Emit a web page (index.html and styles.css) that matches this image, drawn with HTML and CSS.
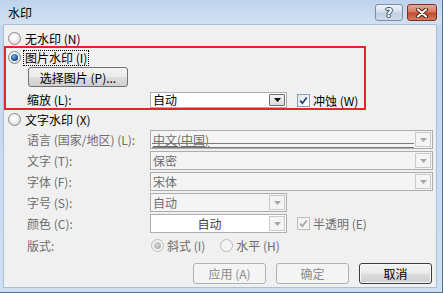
FILE: index.html
```html
<!DOCTYPE html>
<html lang="zh-CN">
<head>
<meta charset="utf-8">
<title>水印</title>
<link rel="stylesheet" href="styles.css">
</head>
<body>
<div class="window">
  <div class="titlebar">
    <span class="title">水印</span>
    <div class="caps">
      <span class="capbtn help">?</span>
      <span class="capbtn close"><svg width="14" height="10" viewBox="0 0 14 10"><path d="M3 1.5 L11 8.5 M11 1.5 L3 8.5" stroke="#4a1b10" stroke-width="4" stroke-linecap="round"/><path d="M3 1.5 L11 8.5 M11 1.5 L3 8.5" stroke="#fff" stroke-width="2.2" stroke-linecap="round"/></svg></span>
    </div>
  </div>
  <div class="client">
    <div class="opt row-none"><span class="radio"></span><span class="otext">无水印 (N)</span></div>

    <div class="picgroup">
      <div class="opt row-pic"><span class="radio on"></span><span class="otext focus">图片水印 (I)</span></div>
      <div class="btn pick">选择图片 (P)...</div>
      <div class="scale-row">
        <span class="lbl">缩放 (L):</span>
        <div class="combo enabled short"><span class="val">自动</span><span class="drop"><svg width="7" height="4" viewBox="0 0 7 4"><path d="M0 0 H7 L3.5 4 Z" fill="#000"/></svg></span></div>
        <span class="check on"><svg width="11" height="11" viewBox="0 0 11 11"><path d="M2.2 5.6 L4.4 8.2 L8.8 2.4" fill="none" stroke="#21407a" stroke-width="1.7"/></svg></span>
        <span class="ctext">冲蚀 (W)</span>
      </div>
    </div>

    <div class="opt row-text"><span class="radio"></span><span class="otext">文字水印 (X)</span></div>

    <div class="fields">
      <span class="lbl dis">语言 (国家/地区) (L):</span>
      <div class="combo disabled full lang"><span class="val"><span class="ul">中文(中国)</span></span><span class="drop"><svg width="7" height="4" viewBox="0 0 7 4"><path d="M0 0 H7 L3.5 4 Z" fill="#a6a6a6"/></svg></span></div>

      <span class="lbl dis">文字 (T):</span>
      <div class="combo disabled full"><span class="val">保密</span><span class="drop"><svg width="7" height="4" viewBox="0 0 7 4"><path d="M0 0 H7 L3.5 4 Z" fill="#a6a6a6"/></svg></span></div>

      <span class="lbl dis">字体 (F):</span>
      <div class="combo disabled full"><span class="val">宋体</span><span class="drop"><svg width="7" height="4" viewBox="0 0 7 4"><path d="M0 0 H7 L3.5 4 Z" fill="#a6a6a6"/></svg></span></div>

      <span class="lbl dis">字号 (S):</span>
      <div class="ctrl">
        <div class="combo disabled short"><span class="val">自动</span><span class="drop"><svg width="7" height="4" viewBox="0 0 7 4"><path d="M0 0 H7 L3.5 4 Z" fill="#a6a6a6"/></svg></span></div>
      </div>

      <span class="lbl dis">颜色 (C):</span>
      <div class="ctrl">
        <div class="combo white short"><span class="val center">自动</span><span class="drop"><svg width="7" height="4" viewBox="0 0 7 4"><path d="M0 0 H7 L3.5 4 Z" fill="#a6a6a6"/></svg></span></div>
        <span class="check dis on"><svg width="11" height="11" viewBox="0 0 11 11"><path d="M2.2 5.6 L4.4 8.2 L8.8 2.4" fill="none" stroke="#a3a3a3" stroke-width="1.7"/></svg></span>
        <span class="ctext dis">半透明 (E)</span>
      </div>

      <span class="lbl dis layout">版式:</span>
      <div class="ctrl layout">
        <span class="radio dis on"></span><span class="rtext dis">斜式 (I)</span>
        <span class="radio dis second"></span><span class="rtext dis">水平 (H)</span>
      </div>
    </div>

    <div class="actions">
      <span class="btn disabled">应用 (A)</span>
      <span class="btn disabled">确定</span>
      <span class="btn default">取消</span>
    </div>
  </div>
</div>
</body>
</html>
```

FILE: styles.css
```css
* { box-sizing: border-box; }
html, body { margin: 0; padding: 0; }
body {
  width: 443px;
  height: 293px;
  overflow: hidden;
  font-family: "Noto Sans CJK SC", "Noto Sans", sans-serif;
  font-size: 12px;
  color: #000;
  background: #c9dbef;
}
.window {
  width: 443px;
  height: 293px;
  display: flex;
  flex-direction: column;
  background: linear-gradient(#c2d6ed, #cfe0f2);
  border-right: 1px solid #5a6f88;
  border-bottom: 1px solid #5a6f88;
}
.titlebar {
  height: 25px;
  flex: 0 0 25px;
  display: flex;
  justify-content: space-between;
  padding: 0 5px 0 8px;
  background: linear-gradient(#bed3ec, #d3e2f3);
}
.title {
  line-height: 25px;
  color: #000;
}
.caps {
  display: flex;
  gap: 4px;
  padding-top: 4px;
}
.capbtn {
  height: 17px;
  border-radius: 3px;
  display: flex;
  align-items: center;
  justify-content: center;
}
.help {
  width: 28px;
  border: 1px solid #7d8ea4;
  background: linear-gradient(#eef3f9, #d3dfec 48%, #bfcfe1 52%, #cfdcea);
  color: #fff;
  font-family: "DejaVu Sans", sans-serif;
  font-weight: bold;
  font-size: 13px;
  line-height: 15px;
  text-shadow: 0 0 1px #33445c, 0 0 1px #33445c, 1px 0 0 #4a5c75, -1px 0 0 #4a5c75, 0 1px 0 #4a5c75, 0 -1px 0 #4a5c75;
}
.close {
  width: 30px;
  border: 1px solid #7a2e22;
  background: linear-gradient(#e8a999, #d4775f 48%, #c2462c 52%, #d67c5e);
}
.client {
  flex: 1;
  margin: 0 6px 5px 4px;
  background: #f0f0f0;
  box-shadow: 0 0 0 1px #aac0da;
  display: flex;
  flex-direction: column;
}

/* option rows */
.opt {
  display: flex;
  align-items: center;
  height: 15px;
}
.row-none { margin-top: 6px; padding-left: 4px; }
.row-pic { margin-top: 2px; padding-left: 2px; }
.row-text { margin-top: 2px; padding-left: 4px; }
.otext { margin-left: 4px; line-height: 14px; }
.focus { outline: 1px dotted #000; outline-offset: 0; padding: 0 1px; margin-left: 3px; }

.radio {
  width: 13px;
  height: 13px;
  flex: 0 0 13px;
  border-radius: 50%;
  border: 1px solid #8a8a8a;
  background: radial-gradient(circle at 45% 40%, #ffffff 20%, #e3e3e3 60%, #cfcfcf);
  position: relative;
}
.radio.on::after {
  content: "";
  position: absolute;
  left: 2px; top: 2px;
  width: 7px; height: 7px;
  border-radius: 50%;
  background: radial-gradient(circle at 40% 35%, #7fb2e6, #1d5a9c 55%, #0f2f5c);
}
.radio.dis { border-color: #b9b9b9; background: #f4f4f4; }
.radio.dis.on::after { background: radial-gradient(circle at 40% 35%, #d8d8d8, #9e9e9e); }

.picgroup {
  margin-top: 0;
  width: 362px;
  height: 64px;
  border: 2px solid #e3262b;
  display: flex;
  flex-direction: column;
}
.btn {
  display: flex;
  align-items: center;
  justify-content: center;
  height: 20px;
  border-radius: 3px;
  border: 1px solid #707070;
  background: linear-gradient(#f3f3f3, #ebebeb 48%, #dddddd 52%, #cfcfcf);
  color: #000;
}
.pick {
  width: 100px;
  margin: 2px 0 0 22px;
}
.scale-row {
  display: flex;
  align-items: center;
  height: 16px;
  margin-top: 5px;
  padding-left: 21px;
}
.scale-row .lbl { width: 123px; }
.lbl { line-height: 16px; white-space: nowrap; }
.lbl.dis { color: #6d6d6d; }

.combo {
  height: 100%;
  display: flex;
  align-items: stretch;
  border: 1px solid #abadb3;
  background: #fff;
}
.combo.short { width: 137px; }
.combo.full { width: 283px; }
.combo.disabled { background: #f4f4f4; border-color: #adadad; color: #6d6d6d; }
.combo.white { background: #fff; border-color: #adadad; color: #404040; }
.val {
  flex: 1;
  padding-left: 2px;
  display: flex;
  align-items: center;
  white-space: nowrap;
  line-height: 14px;
}
.val.center { justify-content: center; padding-left: 0; }
.drop {
  width: 16px;
  margin: 1px;
  display: flex;
  align-items: center;
  justify-content: center;
  border: 1px solid #c9c9c9;
  background: #f4f4f4;
}
.combo.enabled .drop {
  border-color: #6f6f6f;
  background: linear-gradient(#f2f2f2, #dcdcdc);
  border-radius: 1px;
}
.lang .val { position: relative; }
.lang .ul { text-decoration: underline; text-decoration-color: #6d6d6d; }
.lang .val::after {
  content: "";
  position: absolute;
  left: 1px; right: 0; bottom: 0;
  height: 3px;
  border-top: 1px solid #7a7a7a;
  border-bottom: 1px solid #7a7a7a;
}

.check {
  width: 13px;
  height: 13px;
  flex: 0 0 13px;
  border: 1px solid #8e9cb0;
  background: linear-gradient(135deg, #dfe6ee, #ffffff);
  display: flex;
  align-items: center;
  justify-content: center;
}
.scale-row .check { margin-left: 10px; }
.check.dis { border-color: #bcbcbc; background: #f4f4f4; }
.ctext { margin-left: 3px; white-space: nowrap; }
.ctext.dis, .rtext.dis { color: #6d6d6d; }

.fields {
  display: grid;
  grid-template-columns: 123px 1fr;
  grid-auto-rows: 19px;
  row-gap: 2px;
  margin-top: 3px;
  padding-left: 23px;
}
.fields .lbl { line-height: 19px; }
.ctrl {
  display: flex;
  align-items: center;
  height: 19px;
}
.ctrl .check { margin-left: 10px; }
.fields .layout { margin-top: 1px; }
.ctrl.layout .radio { margin-left: 1px; }
.ctrl.layout .radio.second { margin-left: 15px; }
.rtext { margin-left: 3px; white-space: nowrap; }

.actions {
  display: flex;
  justify-content: flex-end;
  gap: 10px;
  margin-top: 9px;
  padding-right: 4px;
}
.actions .btn { width: 73px; height: 21px; }
.btn.disabled {
  border-color: #adb2b5;
  background: #f4f4f4;
  color: #8b8b8b;
}
.btn.default {
  border-color: #3c3c3c;
  box-shadow: inset 0 0 0 1px #f8f8f8;
}
```
